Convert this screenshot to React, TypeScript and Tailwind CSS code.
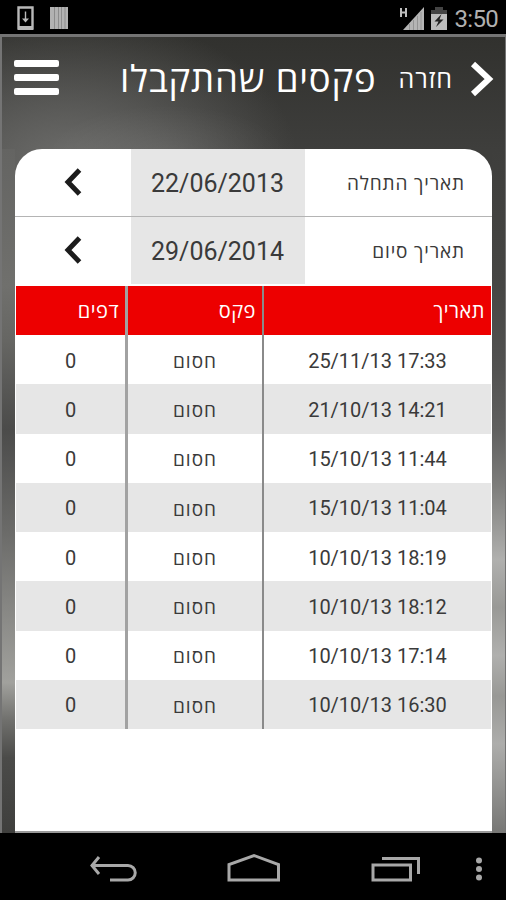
import React from 'react';

interface FaxRow {
  date: string;
  fax: string;
  pages: number;
}

const faxes: FaxRow[] = [
  { date: '25/11/13 17:33', fax: 'חסום', pages: 0 },
  { date: '21/10/13 14:21', fax: 'חסום', pages: 0 },
  { date: '15/10/13 11:44', fax: 'חסום', pages: 0 },
  { date: '15/10/13 11:04', fax: 'חסום', pages: 0 },
  { date: '10/10/13 18:19', fax: 'חסום', pages: 0 },
  { date: '10/10/13 18:12', fax: 'חסום', pages: 0 },
  { date: '10/10/13 17:14', fax: 'חסום', pages: 0 },
  { date: '10/10/13 16:30', fax: 'חסום', pages: 0 },
];

function StatusBar() {
  return (
    <div className="flex h-[34px] items-center justify-between bg-black pr-[8px] pl-[17px]">
      <div className="flex items-center gap-4 pt-0.5">
        <svg width="17" height="25" viewBox="0 0 17 25" fill="none">
          <path d="M1.5 1.5h14v21h-14z" stroke="#b9b9b9" strokeWidth="2.4" />
          <path d="M1 20h15v4H1z" fill="#b9b9b9" />
          <path d="M8.5 5.5v9" stroke="#b9b9b9" strokeWidth="1.4" />
          <path d="M5 12.500h7l-3.500 4z" fill="#b9b9b9" />
        </svg>
        <svg width="18" height="22" viewBox="0 0 18 22">
          <path d="M0 0h18v22H0z" fill="#b2b2b2" />
          <path d="M4.5 0v22M8.5 0v22M11.5 0v22M15 0v22" stroke="#8c8c8c" strokeWidth="1" />
        </svg>
      </div>
      <div className="flex items-center">
        <svg width="49" height="26" viewBox="0 0 49 26" className="mt-0.5">
          <path d="M2 3v9M7 3v9M2 7.500h5" stroke="#bdbdbd" strokeWidth="2" />
          <path d="M25 2v23H4z" fill="#b5b5b5" />
          <path d="M10.5 19v6M14.5 15v10M18.5 11v14M22 7v18" stroke="#949494" strokeWidth="1" />
          <path d="M36 2h8v3h4v5H32V5h4z" fill="#444" />
          <path d="M32 9h16v16H32z" fill="#bcbcbc" />
          <path d="M42.500 9l-7 7.500h4l-2.500 5.500 7.500-7.500h-4z" fill="#222" />
        </svg>
        <span className="ml-[7px] pt-[3px] font-[Roboto,sans-serif] text-[24px] leading-none tracking-[-0.7px] text-[#b0b0b0]">
          3:50
        </span>
      </div>
    </div>
  );
}

function Header() {
  return (
    <header dir="rtl" className="flex h-[84px] shrink-0 items-center pr-[11px] pl-[12px] text-white">
      <svg width="24" height="36" viewBox="0 0 24 36" fill="none">
        <path d="M3 3l16 15L3 33" stroke="#fff" strokeWidth="6" />
      </svg>
      <span className="mr-[17px] -mt-0.5 text-[25px] leading-none tracking-[1px]">חזרה</span>
      <h1 className="mr-[22px] -mt-px text-[36.500px] leading-none tracking-[0.800px] whitespace-nowrap">פקסים שהתקבלו</h1>
      <div className="mr-auto -mt-[3px] flex w-[45px] flex-col gap-[7px]">
        <span className="h-[7px] rounded-xs bg-white" />
        <span className="h-[7px] rounded-xs bg-white" />
        <span className="h-[7px] rounded-xs bg-white" />
      </div>
    </header>
  );
}

function DateField({ label, value }: { label: string; value: string }) {
  return (
    <div className="flex h-[67px] items-center">
      <div className="w-[187px] pt-px pr-[27px] text-[19px] tracking-[0.850px] text-[#3a3a3a]">{label}</div>
      <div className="flex h-full w-[174px] items-center justify-center bg-[#e6e6e6] pt-0.5 pr-px font-[Roboto,sans-serif] text-[25px] text-[#3a3a3a]">
        {value}
      </div>
      <svg width="18" height="28" viewBox="0 0 18 28" fill="none" className="mr-[49px] mb-0.5">
        <path d="M15.500 2L4 14l11.500 12" stroke="#1c1c1c" strokeWidth="5" />
      </svg>
    </div>
  );
}

function FaxTable() {
  return (
    <div className="mx-px text-[20px] text-[#3a3a3a]">
      <div className="grid h-[49px] grid-cols-[229px_137px_1fr] bg-[#ed0000] text-[20px] tracking-[0.500px] text-white">
        <div className="flex items-center border-l-2 border-[#8a8a8a] pt-px pr-[6px]">תאריך</div>
        <div className="flex items-center border-l-[3px] border-[#a2a2a2] pt-px pr-[6px]">פקס</div>
        <div className="flex items-center pt-px pr-[6px]">דפים</div>
      </div>
      {faxes.map((row, i) => (
        <div key={i} className="grid h-[49.250px] grid-cols-[229px_137px_1fr] odd:bg-[#e6e6e6]">
          <div
            dir="ltr"
            className="flex items-center justify-center border-l-2 border-[#8a8a8a] pt-0.5 font-[Roboto,sans-serif]"
          >
            {row.date}
          </div>
          <div className="flex items-center justify-center border-l-[3px] border-[#a2a2a2] pt-[3px] text-[19px] tracking-[1px]">
            {row.fax}
          </div>
          <div className="flex items-center justify-center pt-0.5 font-[Roboto,sans-serif]">{row.pages}</div>
        </div>
      ))}
    </div>
  );
}

function NavBar() {
  return (
    <nav className="flex h-[67px] bg-black">
      <svg width="506" height="67" viewBox="0 0 506 67" fill="none" stroke="#a8a8a8" strokeWidth="3">
        <path d="M99 24l-7 8.500 7 8.500M91 32.500h37a7 7 0 0 1 0 14.500h-18" />
        <path d="M229 47V31.500l25-9 24.500 9V47z" />
        <path d="M373 32h37.500v15H373zM382 25.500h36.500V41" />
        <g fill="#a8a8a8" stroke="none">
          <circle cx="479" cy="27.500" r="3" />
          <circle cx="479" cy="36" r="3" />
          <circle cx="479" cy="44.500" r="3" />
        </g>
      </svg>
    </nav>
  );
}

export default function App() {
  return (
    <div className="flex h-[900px] w-[506px] flex-col overflow-hidden bg-black font-['Open_Sans','Noto_Sans',sans-serif]">
      <StatusBar />
      <main className="flex min-h-0 flex-1 flex-col border-t-[3px] border-r border-l-2 border-[#747474] bg-[radial-gradient(ellipse_120px_50px_at_165px_118px,#ffffff14_0%,transparent_100%),radial-gradient(ellipse_230px_150px_at_65px_125px,#6c6c6a_0%,transparent_100%),linear-gradient(180deg,#31312e_0px,#3e3e3c_112px,#444442_100%)] bg-no-repeat">
        <Header />
        <div className="mt-[28px] flex min-h-0 flex-1">
          {/* brushed metal rails on both sides of the card */}
          <div className="w-[13px] bg-[linear-gradient(180deg,#646462_0%,#70706d_20%,#666663_28%,#4b4b4a_41%,#6b6b69_56%,#848481_66%,#a1a19d_78%,#70706d_83.500%,#4b4b49_89%,#3f3f3d_100%)]" />
          <section dir="rtl" className="flex-1 overflow-hidden rounded-t-[27px] border-b-2 border-[#999] bg-white">
            <DateField label="תאריך התחלה" value="22/06/2013" />
            <div className="h-px bg-[#b4b4b4]" />
            <DateField label="תאריך סיום" value="29/06/2014" />
            <div className="h-0.5" />
            <FaxTable />
          </section>
          <div className="w-[13px] bg-[linear-gradient(180deg,#3e3e3c_0%,#464644_20%,#525251_32%,#60605f_41%,#7c7c7a_49%,#b0b0ae_60%,#999996_67%,#b0b0ae_74%,#989895_80%,#adadab_87%,#777775_100%)]" />
        </div>
      </main>
      <NavBar />
    </div>
  );
}
